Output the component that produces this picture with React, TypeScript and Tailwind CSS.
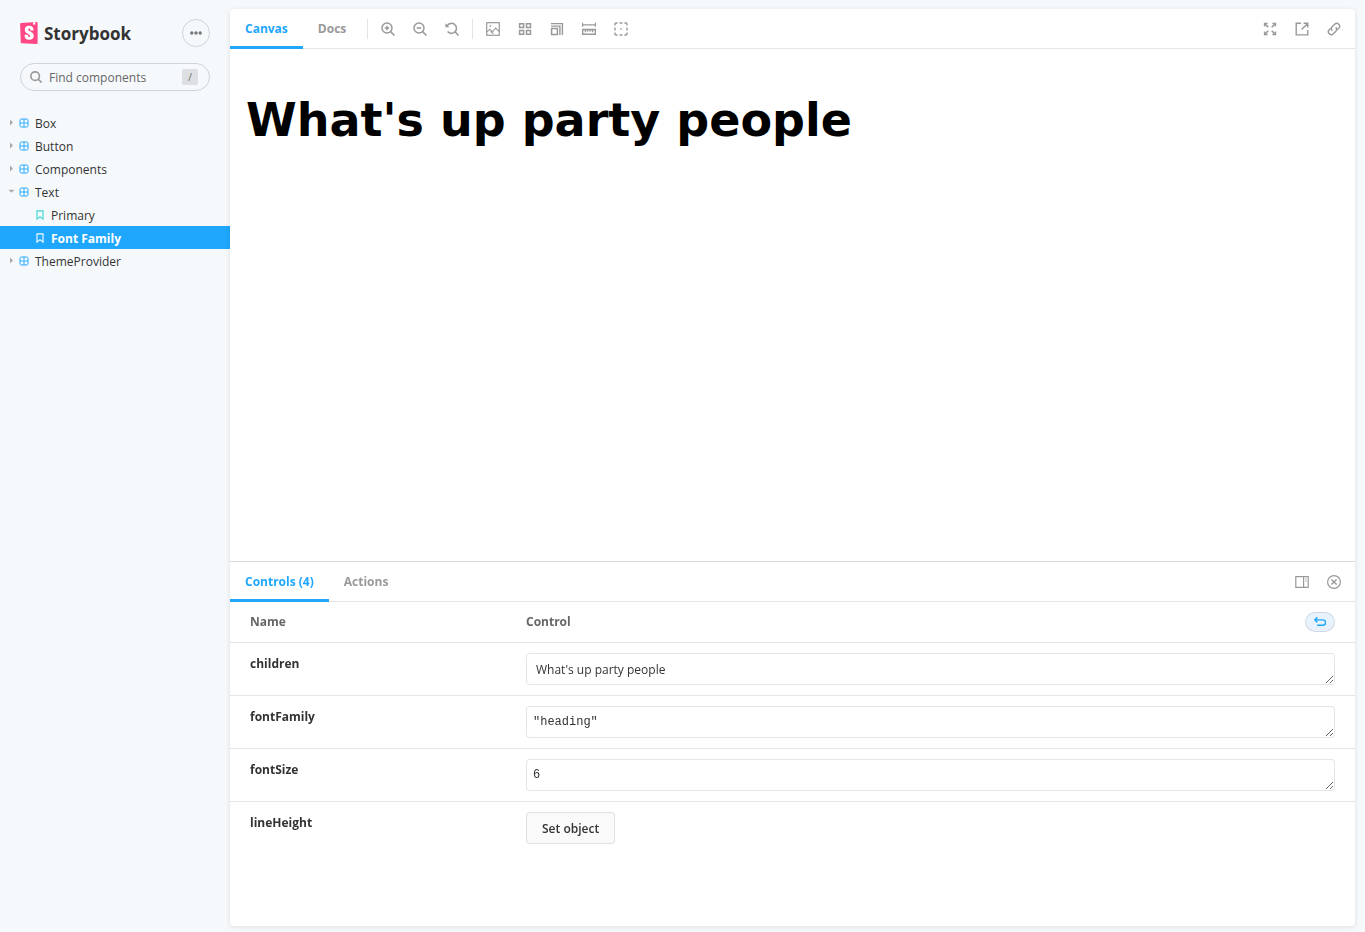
import type { ReactNode } from 'react';

const iconStroke = { fill: 'none', stroke: 'currentColor', strokeWidth: 1.5 };

function Icon({ children, className = 'size-3.5' }: { children: ReactNode; className?: string }) {
  return (
    <svg viewBox="0 0 14 14" className={className} aria-hidden="true" {...iconStroke}>
      {children}
    </svg>
  );
}

const ZoomIn = () => (
  <Icon>
    <circle cx="6" cy="6" r="5" />
    <path d="M9.6 9.6l3.9 3.9M6 3.7v4.6M3.7 6h4.6" />
  </Icon>
);
const ZoomOut = () => (
  <Icon>
    <circle cx="6" cy="6" r="5" />
    <path d="M9.6 9.6l3.9 3.9M3.7 6h4.6" />
  </Icon>
);
const ZoomReset = () => (
  <Icon>
    <path d="M2.2 3.7A5 5 0 1 1 2.6 9.6M9.8 9.6l3.7 3.9" />
    <path d="M.4 1.2v4h4z" fill="currentColor" stroke="none" />
  </Icon>
);
const Picture = () => (
  <Icon>
    <rect x="0.7" y="0.7" width="12.6" height="12.6" strokeWidth="1.2" />
    <path d="M1 9.8l2.8-2.6 2.7 2.6 3.2-3.7 3.5 3.6M4.6 9.4l2.8 2.4" strokeWidth="1.1" />
    <circle cx="4.4" cy="4" r="0.7" strokeWidth="0.8" />
  </Icon>
);
const Grid = () => (
  <Icon>
    <path d="M1.6 1.7h4v3.8h-4zM8.5 1.7h4v3.8h-4zM1.6 8.5h4v3.8h-4zM8.5 8.5h4v3.8h-4z" />
  </Icon>
);
const Viewport = () => (
  <Icon>
    <path d="M1.6 6.6h5.8v5.8H1.6z" />
    <path d="M1 4.1h8.9v8.9M1 1.6h11.4V13" strokeWidth="1.4" />
  </Icon>
);
const Measure = () => (
  <Icon>
    <path d="M.6.8v4M13.4.8v4M.6 2.8h12.8" strokeWidth="1.2" />
    <path d="M.7 7.5h12.6v4.8H.7zM3.5 8v2.2M5.8 8v1.5M8.2 8v1.5M10.5 8v2.2" strokeWidth="1.4" />
  </Icon>
);
const Outline = () => (
  <Icon>
    <path
      d="M1 3.6V2q0-1 1-1h1.6M5.6 1h2.8M10.4 1H12q1 0 1 1v1.6M13 5.6v2.8M13 10.4V12q0 1-1 1h-1.6M8.4 13H5.6M3.6 13H2q-1 0-1-1v-1.6M1 8.4V5.6M6.3 7h1.4"
      strokeWidth="1.4"
    />
  </Icon>
);
const Expand = () => (
  <Icon>
    <path d="M1.5 4.6V1.5h3.1M9.4 1.5h3.1v3.1M12.5 9.4v3.1H9.4M4.6 12.5H1.5V9.4" strokeWidth="1.3" />
    <path d="M1.6 1.6l3.7 3.7M12.4 1.6L8.7 5.3M12.4 12.4L8.7 8.7M1.6 12.4l3.7-3.7" strokeWidth="1.5" />
  </Icon>
);
const ShareOut = () => (
  <Icon>
    <path d="M6 1.3H1.2v11.6h11.6V8M8.6 1.3h4.2v4.2M12.6 1.4L6.6 7.6" strokeWidth="1.4" />
  </Icon>
);
const LinkIcon = () => (
  <Icon>
    <path d="M5.3 8.7a2.9 2.9 0 0 1 0-4.1l2.4-2.4a2.9 2.9 0 0 1 4.1 4.1l-1.5 1.5" strokeWidth="1.4" />
    <path d="M8.7 5.3a2.9 2.9 0 0 1 0 4.1l-2.4 2.4a2.9 2.9 0 0 1-4.1-4.1l1.5-1.5" strokeWidth="1.4" />
  </Icon>
);
const PanelRight = () => (
  <Icon>
    <path d="M.8 1.7h12.4v10.6H.8zM8.6 1.7v10.6" strokeWidth="1.2" />
    <path d="M10.9 3.4v1M10.9 5.4v1" strokeWidth="1.2" />
  </Icon>
);
const CloseRound = () => (
  <Icon>
    <circle cx="7" cy="7" r="6.4" strokeWidth="1.2" />
    <path d="M4.4 4.4l5.2 5.2M9.6 4.4L4.4 9.6" strokeWidth="1.4" />
  </Icon>
);
const Undo = () => (
  <Icon className="size-3">
    <path d="M3.9 1.6L1 4.5l2.9 2.9M1.1 4.5h9.3a2.6 2.6 0 0 1 0 6.2H3.6" strokeWidth="1.7" />
  </Icon>
);

const ComponentMark = () => (
  <svg viewBox="0 0 10 10" className="size-2.5 text-[#1ea7fd]" aria-hidden="true" fill="none" stroke="currentColor">
    <rect x="1" y="1" width="8" height="8" rx="1.5" />
    <path d="M5 1v8M1 5h8" strokeWidth="0.9" />
  </svg>
);
const StoryMark = () => (
  <svg viewBox="0 0 10 10" className="size-2.5" aria-hidden="true" fill="none" stroke="currentColor" strokeWidth="1.1">
    <path d="M2 .9h6v8.2L5 6.6 2 9.1z" />
  </svg>
);

function IconButton({ label, children }: { label: string; children: ReactNode }) {
  return (
    <button type="button" aria-label={label} className="flex h-7 w-8 items-center justify-center text-[#999]">
      {children}
    </button>
  );
}

function Tab({ active, children }: { active?: boolean; children: ReactNode }) {
  return (
    <button
      type="button"
      role="tab"
      aria-selected={!!active}
      className={
        'h-10 border-y-3 border-t-transparent px-[15px] text-[12px] leading-4 font-bold ' +
        (active ? 'border-b-[#1ea7fd] text-[#1ea7fd]' : 'border-b-transparent text-[#999]')
      }
    >
      {children}
    </button>
  );
}

function TreeItem({ label, open }: { label: string; open?: boolean }) {
  return (
    <a href="#" className="flex h-[23px] items-center pl-2">
      <svg viewBox="0 0 7 7" className="mr-1 size-[7px] text-[#aaa]" fill="currentColor" aria-hidden="true">
        {open ? <path d="M.5 1.8h6l-3 3z" /> : <path d="M2 .5v6l3-3z" />}
      </svg>
      <ComponentMark />
      <span className="ml-1.5 pt-0.5">{label}</span>
    </a>
  );
}

function StoryItem({ label, active }: { label: string; active?: boolean }) {
  return (
    <a
      href="#"
      className={
        'flex h-[23px] items-center gap-1.5 pl-[35px] ' + (active ? 'bg-[#1ea7fd] font-bold text-white' : '')
      }
    >
      <span className={active ? 'text-white' : 'text-[#37d5d3]'}>
        <StoryMark />
      </span>
      <span className="pt-0.5">{label}</span>
    </a>
  );
}

function Row({ name, children }: { name: string; children: ReactNode }) {
  return (
    <tr className="h-[53px] border-b border-black/10 align-top last:border-b-0">
      <th scope="row" className="pt-[11px] pl-5 text-left font-bold">
        <label htmlFor={name}>{name}</label>
      </th>
      <td className="pt-2.5 pr-5">{children}</td>
    </tr>
  );
}

const field = 'block h-8 w-full rounded-sm border border-black/10 bg-white outline-none ';

export default function App() {
  return (
    <div className="flex min-h-screen bg-[#f6f9fc] font-['Open_Sans',sans-serif] text-[12px] leading-5 text-[#333]">
      <aside className="w-[230px] shrink-0">
        <div className="px-5 pt-[19px]">
          <div className="flex items-center justify-between">
            <a href="#" className="flex items-center gap-1.5">
              <svg viewBox="6 0 52 64" className="h-[22px] w-[18px]" aria-hidden="true">
                <path
                  fill="#ff4785"
                  d="M8.05 58.79L6.08 6.33a3.2 3.2 0 0 1 2.99-3.31L53.7.23a3.2 3.2 0 0 1 3.39 3.19v57.16a3.2 3.2 0 0 1-3.34 3.2L11.1 61.86a3.2 3.2 0 0 1-3.05-3.07z"
                />
                <path
                  fill="#fff"
                  d="M35.91 24.18c0 1.24 8.37.64 9.5-.23 0-8.47-4.54-12.91-12.86-12.91S19.57 15.55 19.57 22.33c0 11.8 15.93 12.03 15.93 18.47 0 1.81-.89 2.88-2.84 2.88-2.53 0-3.54-1.3-3.42-5.7 0-.96-9.67-1.25-9.97 0-.75 10.67 5.9 13.75 13.51 13.75 7.38 0 13.16-3.93 13.16-11.04 0-12.65-16.17-12.32-16.17-18.58 0-2.55 1.89-2.89 3.01-2.89 1.18 0 3.31.21 3.13 4.96zM44.05.83l6.14-.38.25 7.33q-.2.8-.77.39l-2.36-1.86-2.8 2.12q-.6.3-.76-.4z"
                />
              </svg>
              <span className="pt-0.5 text-[17px] leading-6 font-bold">Storybook</span>
            </a>
            <button
              type="button"
              aria-label="Shortcuts"
              className="flex size-7 items-center justify-center rounded-full border border-black/15 text-[#777]"
            >
              <svg viewBox="0 0 14 14" className="size-3.5" fill="currentColor" aria-hidden="true">
                <circle cx="2.8" cy="7" r="1.7" />
                <circle cx="7" cy="7" r="1.7" />
                <circle cx="11.2" cy="7" r="1.7" />
              </svg>
            </button>
          </div>
          <div className="mt-4 flex h-7 items-center rounded-full border border-black/15 pr-[11px] pl-[9px]">
            <svg viewBox="0 0 14 14" className="size-3 shrink-0 text-[#999]" aria-hidden="true" {...iconStroke} strokeWidth="1.9">
              <circle cx="6" cy="6" r="5" />
              <path d="M9.6 9.6l3.9 3.9" />
            </svg>
            <input
              type="text"
              aria-label="Find components"
              placeholder="Find components"
              className="ml-[7px] w-0 min-w-0 flex-1 bg-transparent pt-0.5 outline-none placeholder:text-[#666]"
            />
            <kbd className="flex size-4 items-center justify-center rounded-xs bg-black/10 font-['Open_Sans',sans-serif] text-[11px] text-[#777]">
              /
            </kbd>
          </div>
        </div>
        <nav className="mt-5">
          <TreeItem label="Box" />
          <TreeItem label="Button" />
          <TreeItem label="Components" />
          <TreeItem label="Text" open />
          <StoryItem label="Primary" />
          <StoryItem label="Font Family" active />
          <TreeItem label="ThemeProvider" />
        </nav>
      </aside>

      <main className="mt-[9px] mr-2.5 mb-1.5 flex min-w-0 flex-1 flex-col overflow-hidden rounded-sm bg-white shadow-[0_1px_5px_0_rgba(0,0,0,0.1)]">
        <div className="flex h-10 shrink-0 items-center justify-between border-b border-black/10">
          <div className="flex items-center">
            <div role="tablist" className="flex">
              <Tab active>Canvas</Tab>
              <Tab>Docs</Tab>
            </div>
            <span className="mr-1 ml-1.5 h-5 w-px bg-black/10" />
            <IconButton label="Zoom in"><ZoomIn /></IconButton>
            <IconButton label="Zoom out"><ZoomOut /></IconButton>
            <IconButton label="Reset zoom"><ZoomReset /></IconButton>
            <span className="mx-1 h-5 w-px bg-black/10" />
            <IconButton label="Change background"><Picture /></IconButton>
            <IconButton label="Apply a grid"><Grid /></IconButton>
            <IconButton label="Change viewport"><Viewport /></IconButton>
            <IconButton label="Enable measure"><Measure /></IconButton>
            <IconButton label="Apply outlines"><Outline /></IconButton>
          </div>
          <div className="flex pr-[5px]">
            <IconButton label="Go full screen"><Expand /></IconButton>
            <IconButton label="Open in new tab"><ShareOut /></IconButton>
            <IconButton label="Copy link"><LinkIcon /></IconButton>
          </div>
        </div>

        <section className="flex-1 px-4 pt-10">
          <h1 className="font-['DejaVu_Sans',sans-serif] text-[46px] leading-[62px] font-bold text-black">
            What's up party people
          </h1>
        </section>

        <section className="min-h-[365px] shrink-0 border-t border-black/15">
          <div className="flex h-10 items-center justify-between border-b border-black/10">
            <div role="tablist" className="flex">
              <Tab active>Controls (4)</Tab>
              <Tab>Actions</Tab>
            </div>
            <div className="flex pr-[5px]">
              <IconButton label="Change orientation"><PanelRight /></IconButton>
              <IconButton label="Hide addons"><CloseRound /></IconButton>
            </div>
          </div>
          <table className="w-full table-fixed border-collapse">
            <thead>
              <tr className="h-10 border-b border-black/10 text-left text-[#666]">
                <th scope="col" className="w-[296px] pl-5 font-bold">Name</th>
                <th scope="col" className="pr-5 font-bold">
                  <div className="flex items-center justify-between">
                    Control
                    <button
                      type="button"
                      aria-label="Reset controls"
                      className="flex h-5 w-[30px] items-center justify-center rounded-full border border-black/10 bg-[#e8f2fc] text-[#1ea7fd]"
                    >
                      <Undo />
                    </button>
                  </div>
                </th>
              </tr>
            </thead>
            <tbody>
              <Row name="children">
                <textarea
                  id="children"
                  rows={1}
                  defaultValue="What's up party people"
                  className={field + 'px-[9px] py-1.5 leading-5'}
                />
              </Row>
              <Row name="fontFamily">
                <textarea
                  id="fontFamily"
                  rows={1}
                  defaultValue={'"heading"'}
                  className={field + "px-1.5 py-1.5 font-['Liberation_Mono',monospace] leading-[18px]"}
                />
              </Row>
              <Row name="fontSize">
                <textarea
                  id="fontSize"
                  rows={1}
                  defaultValue="6"
                  className={field + "px-1.5 py-1.5 font-['Liberation_Mono',monospace] leading-[18px]"}
                />
              </Row>
              <Row name="lineHeight">
                <button
                  id="lineHeight"
                  type="button"
                  className="h-8 rounded-sm border border-black/10 bg-[#fafafa] px-[15px] pt-0.5 font-semibold"
                >
                  Set object
                </button>
              </Row>
            </tbody>
          </table>
        </section>
      </main>
    </div>
  );
}
